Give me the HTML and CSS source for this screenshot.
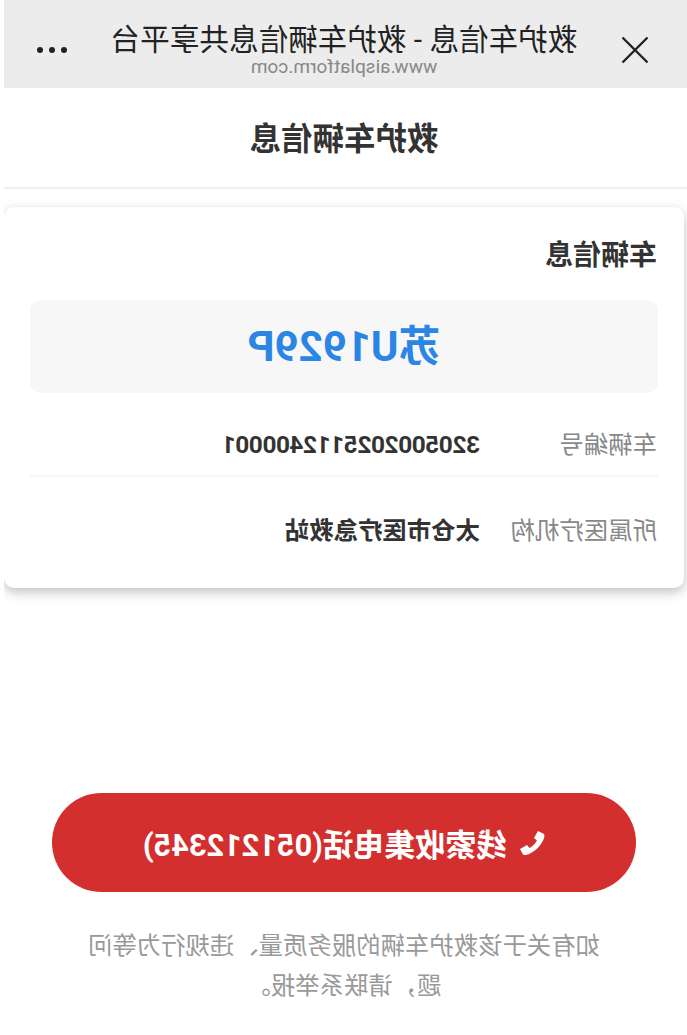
FILE: index.html
```html
<!DOCTYPE html>
<html lang="zh-CN">
<head>
    <meta charset="UTF-8">
    <meta name="viewport" content="width=device-width, initial-scale=1.0">
    <title>救护车信息</title>
    <link rel="stylesheet" href="styles.css">
</head>
<body>
<div class="page">
    <div class="topbar">
        <svg class="close-icon" viewBox="0 0 28 28" width="28" height="28">
            <path d="M1.5 1.5 L26.5 26.5 M26.5 1.5 L1.5 26.5" fill="none" stroke="#222" stroke-width="2.4"/>
        </svg>
        <div class="topbar-text">
            <div class="topbar-title">救护车信息 - 救护车辆信息共享平台</div>
            <div class="topbar-url">www.aisplatform.com</div>
        </div>
        <div class="dots"><span></span><span></span><span></span></div>
    </div>

    <div class="page-title">救护车辆信息</div>

    <div class="card">
        <h2>车辆信息</h2>
        <div class="plate">苏U1929P</div>
        <div class="row">
            <div class="row-label">车辆编号</div>
            <div class="row-value row-number">3205002025112400001</div>
        </div>
        <div class="row">
            <div class="row-label">所属医疗机构</div>
            <div class="row-value">太仓市医疗急救站</div>
        </div>
    </div>

    <button class="call-btn">
        <svg class="phone-icon" viewBox="0 0 26 26" width="26" height="26">
            <path d="M1 4 L7 1 L11 8 L8 10.5 C10 14 12 16 15.5 18 L18 15 L25 19 L22 24.5 C20 25.5 18 25 15 23.5 C8 20 3 14 1 8 C0.5 6.5 0.5 5 1 4 Z" fill="#fff"/>
        </svg>
        <span>线索收集电话(051212345)</span>
    </button>

    <p class="note">如有关于该救护车辆的服务质量、违规行为等问题，请联系举报。</p>
</div>
</body>
</html>
```

FILE: styles.css
```css
html, body {
    margin: 0;
    padding: 0;
    background-color: #fff;
}

/* the whole page reads right to left, flipped like a mirror */
.page {
    width: 683px;
    height: 1035px;
    margin-left: 4px;
    transform: scaleX(-1);
    font-family: Roboto, "Noto Sans CJK SC", sans-serif;
    color: #333;
    overflow: hidden;
}

.topbar {
    height: 88px;
    background-color: #ececec;
    display: flex;
    align-items: center;
    justify-content: space-between;
    padding: 0 33px 0 38px;
    box-sizing: border-box;
}

.close-icon {
    flex-shrink: 0;
    margin-top: 11px;
}

.topbar-text {
    text-align: center;
    margin-top: 6px;
}

.topbar-title {
    font-size: 29.6px;
    line-height: 40px;
    color: #222;
}

.topbar-url {
    font-size: 19px;
    line-height: 16px;
    color: #888;
    margin-top: -1px;
}

.dots {
    display: flex;
    gap: 6px;
    margin-top: 11px;
}

.dots span {
    width: 6px;
    height: 6px;
    border-radius: 50%;
    background-color: #222;
}

.page-title {
    height: 99px;
    line-height: 104px;
    padding-left: 3px;
    text-align: center;
    font-size: 31.5px;
    font-weight: bold;
    border-bottom: 2px solid #eee;
}

.card {
    margin: 18px 0 0 3px;
    height: 381px;
    padding: 0 26px;
    background-color: #fff;
    border-radius: 10px;
    box-shadow: 0 4px 12px rgba(0, 0, 0, 0.25);
    box-sizing: border-box;
}

.card h2 {
    margin: 0;
    padding: 30px 0 0 1px;
    font-size: 28px;
    line-height: 38px;
    font-weight: bold;
}

.plate {
    margin-top: 25px;
    height: 93px;
    line-height: 94px;
    background-color: #f7f7f7;
    border-radius: 10px;
    text-align: center;
    font-size: 42px;
    font-weight: bold;
    color: #2b85e4;
}

.row {
    display: flex;
    height: 82px;
    padding-left: 1px;
    line-height: 104px;
    font-size: 24.4px;
    border-bottom: 2px solid #f5f5f5;
}

.row:last-child {
    border-bottom: none;
    line-height: 108px;
}

.row-label {
    width: 177px;
    color: #888;
    flex-shrink: 0;
}

.row-value {
    font-weight: bold;
}

.row-number {
    letter-spacing: -0.42px;
}

.call-btn {
    display: flex;
    align-items: center;
    justify-content: center;
    gap: 12px;
    width: 584px;
    height: 99px;
    margin: 205px 0 0 51px;
    border: none;
    border-radius: 50px;
    background-color: #d32f2f;
    color: #fff;
    font-family: inherit;
    font-size: 30.7px;
    font-weight: bold;
}

.note {
    width: 520px;
    margin: 34px 0 0 83px;
    font-size: 24.4px;
    line-height: 40px;
    text-align: center;
    color: #999;
}
```
